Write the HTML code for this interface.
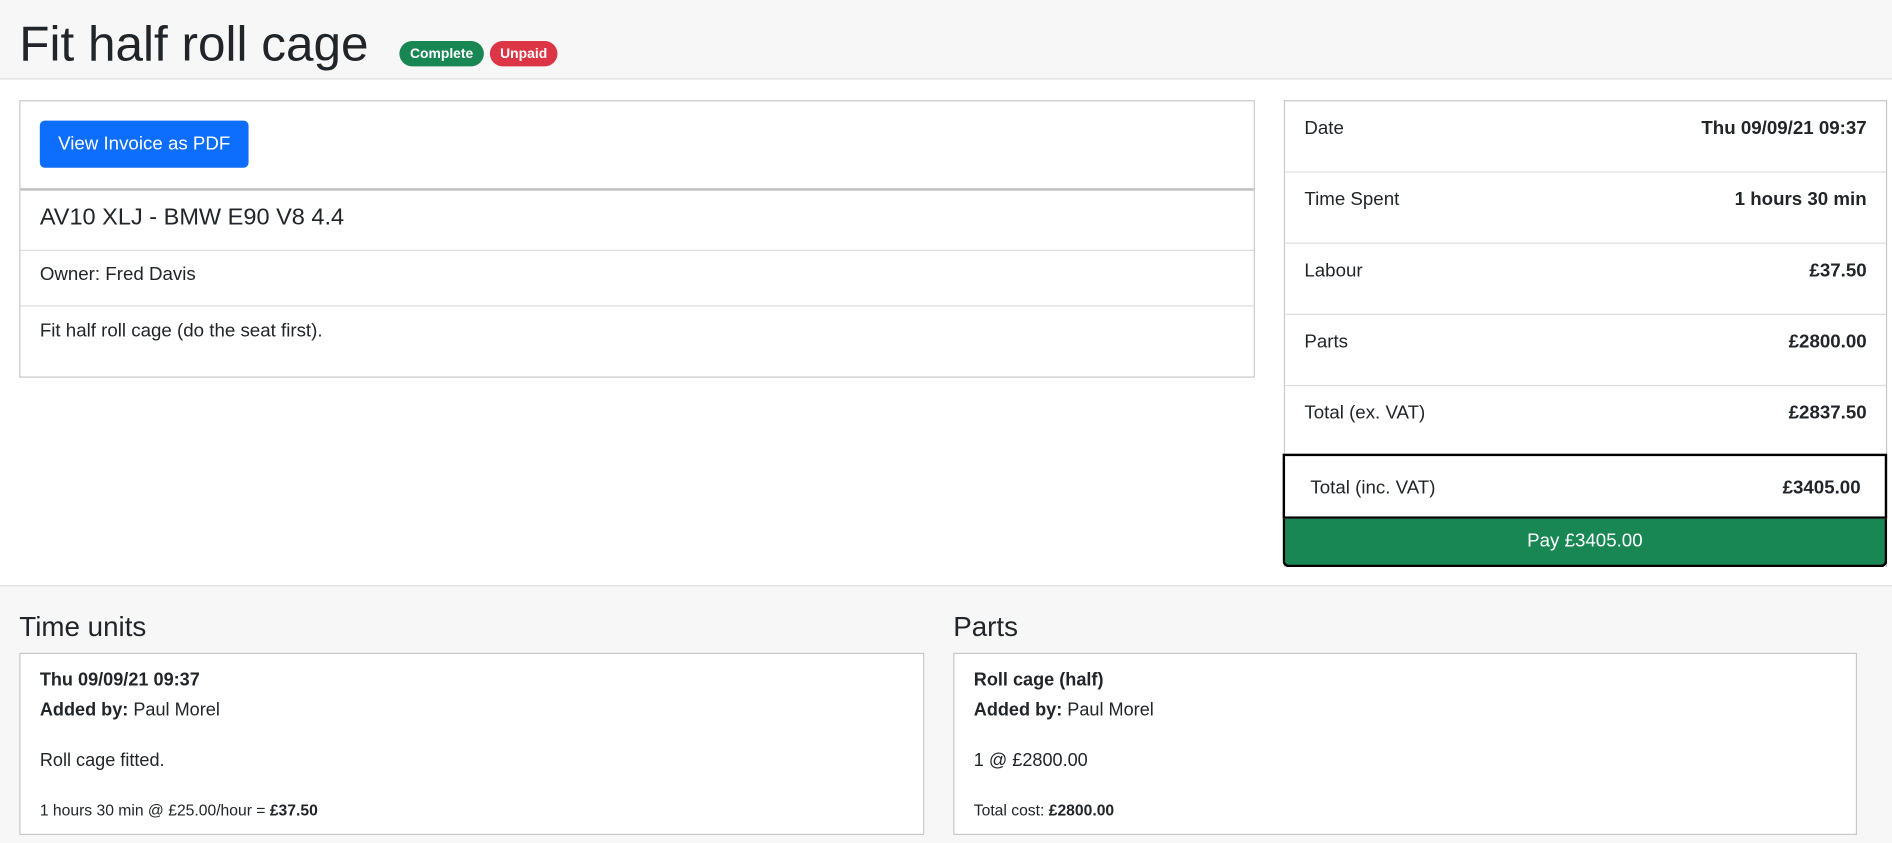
<!DOCTYPE html>
<html><head><meta charset="utf-8"><style>
html,body{margin:0;padding:0;width:1892px;height:843px;overflow:hidden;background:#f7f7f7}
#w{width:1568px;height:699px;transform:scale(1.20663);transform-origin:0 0;position:relative;font-family:"Liberation Sans",sans-serif;color:#212529;background:#f7f7f7}
.a{position:absolute}
.hdr{left:0;top:0;width:1568px;height:65px;border-bottom:1px solid #dcdcdc;background:#f7f7f7}
.title{left:16px;top:11px;font-size:41px;line-height:50px}
.badge{top:34px;height:21px;line-height:22px;border-radius:11px;color:#fff;font-size:11.5px;font-weight:bold;text-align:center}
.main{left:0;top:66px;width:1568px;height:419px;background:#fff;border-bottom:1px solid #dcdcdc}
.card{background:#fff;border:1px solid #c8c8c8;box-sizing:border-box}
.row{position:absolute;left:0;right:0;border-bottom:1px solid #dcdcdc;box-sizing:border-box}
.rrow{position:absolute;left:0;right:0;height:59px;border-bottom:1px solid #dcdcdc;font-size:15.5px;box-sizing:border-box}
.rrow span{position:absolute;top:14px}
.rrow b{position:absolute;right:16px;top:14px}
.h2{font-size:23px}
.it{position:absolute;left:16px;font-size:15px}
</style></head><body><div id="w">
<div class="a hdr"></div>
<div class="a title">Fit half roll cage</div>
<div class="a badge" style="left:331px;width:70px;background:#198754">Complete</div>
<div class="a badge" style="left:406px;width:56px;background:#dc3545">Unpaid</div>
<div class="a main"></div>

<div class="a card" style="left:16px;top:83px;width:1024px;height:230px">
 <div class="row" style="top:0;height:74px;border-bottom:2px solid #c0c0c0"></div>
 <div class="a" style="left:16px;top:16px;width:173px;height:39px;background:#0d6efd;border-radius:4px;color:#fff;font-size:15.5px;line-height:40px;text-align:center">View Invoice as PDF</div>
 <div class="row" style="top:74px;height:50px"></div>
 <div class="a" style="left:16px;top:85px;font-size:19.5px">AV10 XLJ - BMW E90 V8 4.4</div>
 <div class="row" style="top:124px;height:46px"></div>
 <div class="a" style="left:16px;top:135px;font-size:15.5px">Owner: Fred Davis</div>
 <div class="a" style="left:16px;top:182px;font-size:15.5px">Fit half roll cage (do the seat first).</div>
</div>

<div class="a card" style="left:1064px;top:83px;width:500px;height:387px;border-bottom:none">
 <div class="rrow" style="top:0"><span style="left:16px">Date</span><b>Thu 09/09/21 09:37</b></div>
 <div class="rrow" style="top:59px"><span style="left:16px">Time Spent</span><b>1 hours 30 min</b></div>
 <div class="rrow" style="top:118px"><span style="left:16px">Labour</span><b>£37.50</b></div>
 <div class="rrow" style="top:177px"><span style="left:16px">Parts</span><b>£2800.00</b></div>
 <div class="rrow" style="top:236px;height:58px;border-bottom:none"><span style="left:16px">Total (ex. VAT)</span><b>£2837.50</b></div>
</div>
<div class="a" style="left:1063px;top:376px;width:501px;height:54px;border:2px solid #000;box-sizing:border-box;background:#fff;font-size:15.5px">
 <span class="a" style="left:21px;top:18px">Total (inc. VAT)</span><b class="a" style="right:20px;top:18px">£3405.00</b>
</div>
<div class="a" style="left:1063px;top:430px;width:501px;height:40px;border:2px solid #000;border-top:none;border-radius:0 0 5px 5px;box-sizing:border-box;background:#198754;color:#fff;font-size:15.5px;text-align:center;line-height:38px">Pay £3405.00</div>

<div class="a h2" style="left:16px;top:506px">Time units</div>
<div class="a h2" style="left:790px;top:506px">Parts</div>
<div class="a card" style="left:16px;top:541px;width:750px;height:151px">
 <div class="it" style="top:13px;font-weight:bold">Thu 09/09/21 09:37</div>
 <div class="it" style="top:38px"><b>Added by:</b> Paul Morel</div>
 <div class="it" style="top:80px">Roll cage fitted.</div>
 <div class="it" style="top:122px;font-size:13px">1 hours 30 min @ £25.00/hour = <b>£37.50</b></div>
</div>
<div class="a card" style="left:790px;top:541px;width:749px;height:151px">
 <div class="it" style="top:13px;font-weight:bold">Roll cage (half)</div>
 <div class="it" style="top:38px"><b>Added by:</b> Paul Morel</div>
 <div class="it" style="top:80px">1 @ £2800.00</div>
 <div class="it" style="top:122px;font-size:13px">Total cost: <b>£2800.00</b></div>
</div>
</div></body></html>
